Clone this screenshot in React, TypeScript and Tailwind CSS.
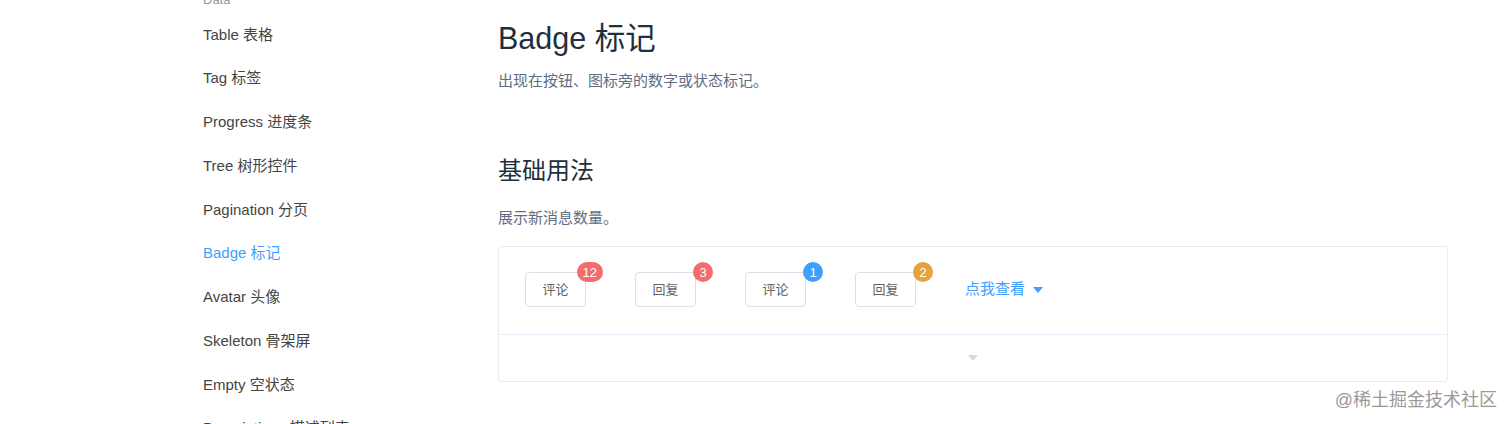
const FONT = '"Liberation Sans", "Noto Sans CJK SC", sans-serif';

const NAV = [
  "Table 表格",
  "Tag 标签",
  "Progress 进度条",
  "Tree 树形控件",
  "Pagination 分页",
  "Badge 标记",
  "Avatar 头像",
  "Skeleton 骨架屏",
  "Empty 空状态",
  "Descriptions 描述列表",
];

const ITEMS = [
  { label: "评论", value: "12", color: "bg-[#f56c6c]" },
  { label: "回复", value: "3", color: "bg-[#f56c6c]" },
  { label: "评论", value: "1", color: "bg-[#409eff]" },
  { label: "回复", value: "2", color: "bg-[#e6a23c]" },
];

function Caret({ className }: { className: string }) {
  return (
    <svg width="10" height="6" viewBox="0 0 10 6" className={className}>
      <path d="M0 0h10L5 6z" fill="currentColor" />
    </svg>
  );
}

function BadgeButton({ label, value, color }: { label: string; value: string; color: string }) {
  return (
    <div className="relative inline-block">
      <button className="flex h-[35px] w-[61px] items-center justify-center rounded-[4px] border border-[#dcdfe6] bg-white text-[13px] text-[#606266]">
        {label}
      </button>
      <span
        className={`absolute top-[-10px] right-[-17px] flex h-[20px] min-w-[20px] items-center justify-center rounded-full px-[6px] text-[13px] leading-none text-white ${color}`}
      >
        {value}
      </span>
    </div>
  );
}

export default function App() {
  return (
    <div className="relative flex h-[424px] w-[1512px] overflow-hidden bg-white" style={{ fontFamily: FONT }}>
      {/* sidebar */}
      <nav className="w-[498px] shrink-0 pl-[203px]">
        <div className="mt-[-11px] h-[22px] text-[13px] leading-[22px] text-[#999]">Data</div>
        <ul className="mt-[2px]">
          {NAV.map((item) => (
            <li
              key={item}
              className={`flex h-[43.75px] items-center text-[15px] ${item.startsWith("Badge") ? "text-[#409eff]" : "text-[#444]"}`}
            >
              {item}
            </li>
          ))}
        </ul>
      </nav>

      {/* content */}
      <main className="w-[950px] shrink-0">
        <h1 className="mt-[18px] text-[30.5px] leading-[40px] font-normal text-[#1f2f3d]">Badge 标记</h1>
        <p className="mt-[11px] text-[15px] leading-[24px] text-[#5e6d82]">出现在按钮、图标旁的数字或状态标记。</p>
        <h3 className="mt-[62px] text-[24px] leading-[32px] font-normal text-[#1f2f3d]">基础用法</h3>
        <p className="mt-[19px] text-[15px] leading-[24px] text-[#5e6d82]">展示新消息数量。</p>

        <div className="mt-[16px] rounded-[4px] border border-[#ebebeb]">
          <div className="flex items-center gap-[49px] pt-[25px] pb-[27px] pl-[26px]">
            {ITEMS.map((it, i) => (
              <BadgeButton key={i} {...it} />
            ))}
            <div className="flex items-center gap-[8px] text-[15px] text-[#409eff]">
              点我查看
              <Caret className="text-[#409eff]" />
            </div>
          </div>
          <div className="flex h-[47px] items-center justify-center border-t border-[#eaeefb]">
            <Caret className="text-[#d3dce6]" />
          </div>
        </div>
      </main>

      <div className="absolute right-[15px] bottom-[12px] text-[18px] leading-[24px] text-[#9a9a9a] [text-shadow:0_0_2px_#fff]">
        @稀土掘金技术社区
      </div>
    </div>
  );
}
